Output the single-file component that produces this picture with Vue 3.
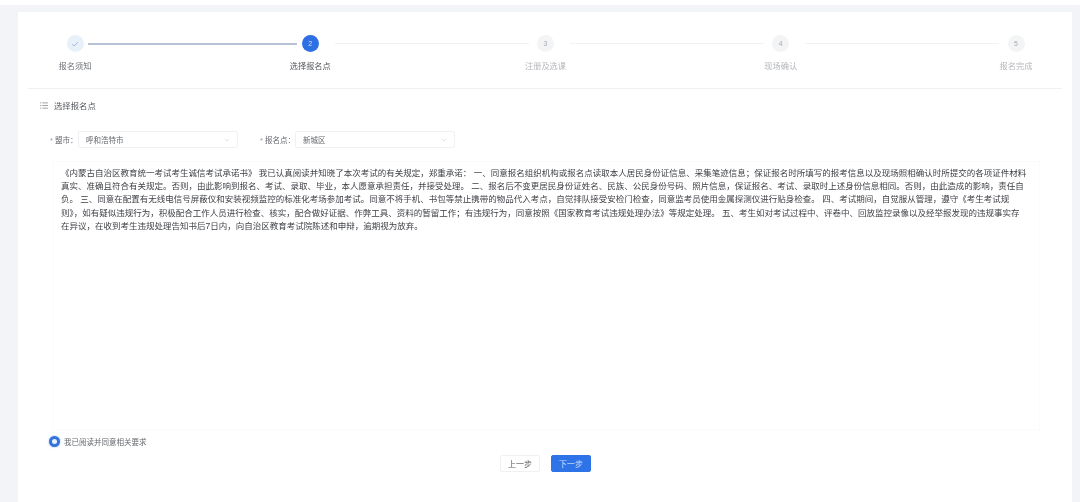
<script setup>
const C = '\uFF0C'
const S = '\uFF1B'
const K = '\uFF1A'
const raw = [
  '《内蒙古自治区教育统一考试考生诚信考试承诺书》 我已认真阅读并知晓了本次考试的有关规定,郑重承诺: 一、同意报名组织机构或报名点读取本人居民身份证信息、采集笔迹信息;保证报名时所填写的报考信息以及现场照相确认时所提交的各项证件材料',
  '真实、准确且符合有关规定。否则,由此影响到报名、考试、录取、毕业,本人愿意承担责任,并接受处理。 二、报名后不变更居民身份证姓名、民族、公民身份号码、照片信息,保证报名、考试、录取时上述身份信息相同。否则,由此造成的影响,责任自',
  '负。 三、同意在配置有无线电信号屏蔽仪和安装视频监控的标准化考场参加考试。同意不将手机、书包等禁止携带的物品代入考点,自觉排队接受安检门检查,同意监考员使用金属探测仪进行贴身检查。 四、考试期间,自觉服从管理,遵守《考生考试规',
  '则》,如有疑似违规行为,积极配合工作人员进行检查、核实,配合做好证据、作弊工具、资料的暂留工作;有违规行为,同意按照《国家教育考试违规处理办法》等规定处理。 五、考生如对考试过程中、评卷中、回放监控录像以及经举报发现的违规事实存',
  '在异议,在收到考生违规处理告知书后7日内,向自治区教育考试院陈述和申辩,逾期视为放弃。',
]
const lines = raw.map((l) => l.replaceAll(',', C).replaceAll(';', S).replaceAll(':', K))
const cityLabel = '盟市' + K
const siteLabel = '报名点' + K
const steps = [
  { n: '', label: '报名须知', state: 'done' },
  { n: '2', label: '选择报名点', state: 'active' },
  { n: '3', label: '注册及选课', state: 'todo' },
  { n: '4', label: '现场确认', state: 'todo' },
  { n: '5', label: '报名完成', state: 'todo' },
]
</script>

<template>
  <div class="page">
    <div class="topstrip"></div>
    <main class="card">
      <div class="steps">
        <template v-for="(s, i) in steps" :key="i">
          <div class="step" :class="s.state">
            <span class="dot">
              <svg v-if="s.state === 'done'" viewBox="0 0 10 10" width="8" height="8">
                <path d="M1.5 5.2 4 7.6 8.6 2.6" fill="none" stroke="#8fb2dc" stroke-width="1.1" />
              </svg>
              <template v-else>{{ s.n }}</template>
            </span>
            <span class="label">{{ s.label }}</span>
          </div>
          <div v-if="i < steps.length - 1" class="link">
            <div class="line" :class="{ on: i === 0 }"></div>
          </div>
        </template>
      </div>

      <div class="section-head">
        <svg viewBox="0 0 9 8" width="8" height="7" class="list-icon">
          <path d="M0 1h1.4M0 4h1.4M0 7h1.4M2.6 1H9M2.6 4H9M2.6 7H9" stroke="#77797f" stroke-width=".8" fill="none" />
        </svg>
        <span>选择报名点</span>
      </div>

      <div class="form">
        <div class="field">
          <label class="city-label"><i>*</i> {{ cityLabel }}</label>
          <div class="select">
            <span>呼和浩特市</span>
            <svg viewBox="0 0 8 5" width="6" height="4"><path d="M1 1l3 3 3-3" fill="none" stroke="#d3d5d9" /></svg>
          </div>
        </div>
        <div class="field">
          <label class="site-label"><i>*</i> {{ siteLabel }}</label>
          <div class="select">
            <span>新城区</span>
            <svg viewBox="0 0 8 5" width="6" height="4"><path d="M1 1l3 3 3-3" fill="none" stroke="#d3d5d9" /></svg>
          </div>
        </div>
      </div>

      <div class="terms">
        <p v-for="(l, i) in lines" :key="i">{{ l }}</p>
      </div>

      <div class="agree">
        <span class="radio"></span>
        <span>我已阅读并同意相关要求</span>
      </div>

      <div class="actions">
        <button class="btn" type="button">上一步</button>
        <button class="btn primary" type="button">下一步</button>
      </div>
    </main>
  </div>
</template>

<style>
html, body { margin: 0; background: #f2f3f5; overflow: hidden; }
</style>

<style scoped>
.page {
  width: 1080px;
  height: 502px;
  overflow: hidden;
  background: #f2f4f7;
  font-family: "Liberation Sans", "Noto Sans CJK SC", sans-serif;
  color: #4a4c52;
  filter: blur(0.55px);
}
.topstrip { height: 5px; background: #fff; margin-bottom: 7px; }
.card {
  width: 1054px;
  height: 490px;
  margin-left: 18px;
  background: #fff;
  box-sizing: border-box;
  padding: 23px 10px 0;
}
.steps {
  display: flex;
  align-items: flex-start;
  padding: 0 21px 0 22px;
  height: 54px;
  box-sizing: border-box;
  border-bottom: 1px solid #f0f1f3;
}
.step {
  width: 50px;
  flex: none;
  display: flex;
  flex-direction: column;
  align-items: center;
  font-size: 8.2px;
}
.dot {
  width: 17px;
  height: 17px;
  border-radius: 50%;
  display: flex;
  align-items: center;
  justify-content: center;
  font-size: 7px;
  margin-bottom: 9px;
}
.label { white-space: nowrap; line-height: 12px; }
.done .dot { background: #e8f1fa; }
.done .label { color: #6d6f75; }
.active .dot { background: #2f6fe4; color: #cfe0fb; }
.active .label { color: #55575c; }
.todo .dot { background: #f3f4f5; color: #a8aaae; }
.todo .label { color: #b4b6ba; }
.link {
  flex: 1;
  margin: 8px -16.5px 0;
}
.line {
  height: 1px;
  margin: 0 8.5px 0 16px;
  background: #f1f2f4;
}
.line.on { height: 2px; margin: 0 4.5px; background: #b6c1d6; }
.section-head {
  display: flex;
  align-items: center;
  gap: 6px;
  height: 32px;
  padding-left: 12px;
  font-size: 8.4px;
  color: #55575c;
}
.form {
  display: flex;
  gap: 22px;
  margin-top: 10px;
  padding-left: 22px;
}
.field { display: flex; align-items: center; font-size: 7.5px; color: #66686d; }
.field label { white-space: nowrap; }
.city-label { width: 28px; }
.site-label { width: 35px; }
.field i { font-style: normal; color: #9b9da1; }
.select {
  width: 160px;
  height: 17px;
  box-sizing: border-box;
  border: 1px solid #f0f1f3;
  border-radius: 2px;
  display: flex;
  align-items: center;
  justify-content: space-between;
  padding: 0 7px;
}
.terms {
  height: 269px;
  margin: 13px 22px 0 24px;
  padding: 5px 8px;
  box-sizing: border-box;
  border: 1px solid #fbfbfc;
  font-size: 8.5px;
  line-height: 13.2px;
  color: #3f4146;
}
.terms p { margin: 0; white-space: nowrap; }
.agree {
  display: flex;
  align-items: center;
  gap: 4px;
  margin: 6px 0 0 21px;
  font-size: 7.5px;
  color: #66686d;
}
.radio {
  width: 5px;
  height: 5px;
  border-radius: 50%;
  background: #e9f0fc;
  border: 3px solid #3474dc;
  box-shadow: 0 0 2px #7fadf0;
}
.actions {
  display: flex;
  justify-content: center;
  gap: 11px;
  margin: 8px 0 0 1px;
}
.btn {
  width: 40px;
  height: 17px;
  padding: 0;
  border: 1px solid #f0f1f3;
  border-radius: 2px;
  background: #fff;
  color: #55575c;
  font: inherit;
  font-size: 8px;
}
.btn.primary { background: #2f73e8; border-color: #2f73e8; color: #cfe0fb; }
</style>
